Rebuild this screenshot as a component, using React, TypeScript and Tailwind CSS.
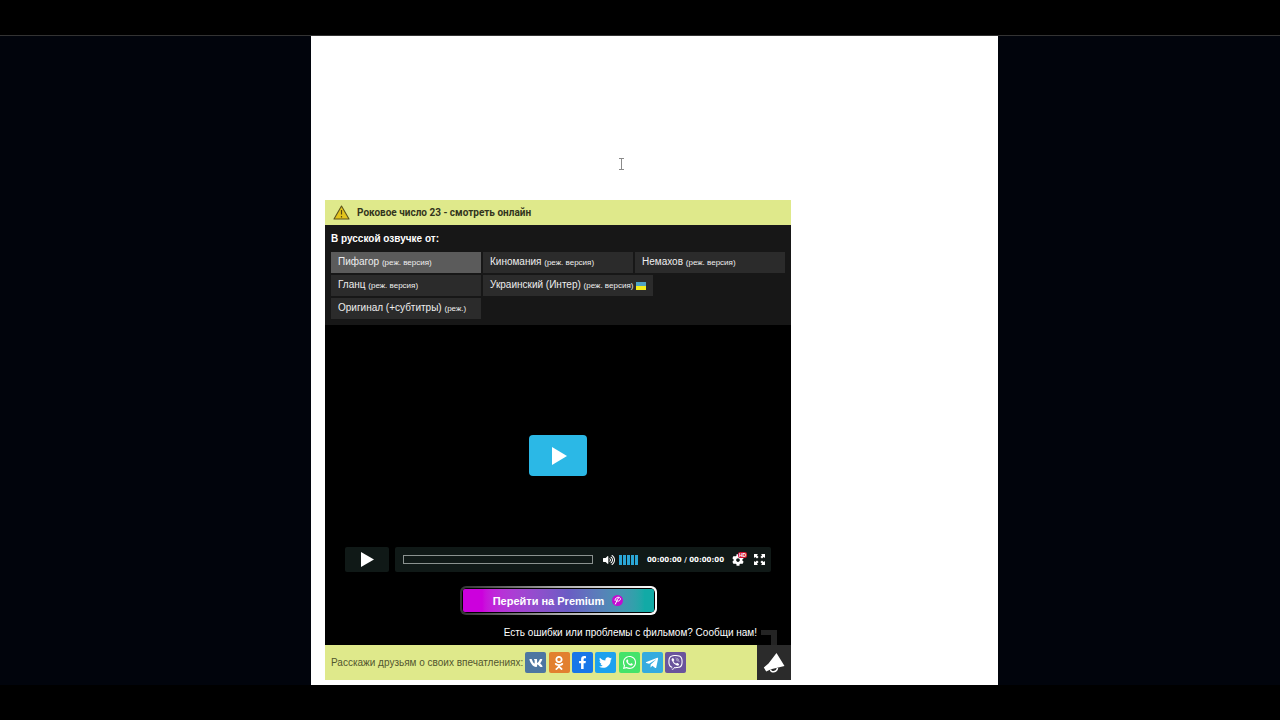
import { ReactNode } from 'react';
import { clsx } from 'clsx';
import {
  FaVk,
  FaOdnoklassniki,
  FaFacebookF,
  FaTwitter,
  FaWhatsapp,
  FaTelegramPlane,
  FaViber,
  FaCog,
  FaVolumeUp,
} from 'react-icons/fa';

type Voice = { name: string; note: string; flag?: boolean };

const voices: Voice[] = [
  { name: 'Пифагор', note: '(реж. версия)' },
  { name: 'Киномания', note: '(реж. версия)' },
  { name: 'Немахов', note: '(реж. версия)' },
  { name: 'Гланц', note: '(реж. версия)' },
  { name: 'Украинский (Интер)', note: '(реж. версия)', flag: true },
  { name: 'Оригинал (+субтитры)', note: '(реж.)' },
];

const socials: { label: string; color: string; icon: ReactNode }[] = [
  { label: 'ВКонтакте', color: 'bg-[#4d76a1]', icon: <FaVk size={14} /> },
  { label: 'Одноклассники', color: 'bg-[#e2802f]', icon: <FaOdnoklassniki size={14} /> },
  { label: 'Facebook', color: 'bg-[#1877e8]', icon: <FaFacebookF size={13} /> },
  { label: 'Twitter', color: 'bg-[#1da1ee]', icon: <FaTwitter size={13} /> },
  { label: 'WhatsApp', color: 'bg-[#45e36a]', icon: <FaWhatsapp size={15} /> },
  { label: 'Telegram', color: 'bg-[#35abdf]', icon: <FaTelegramPlane size={14} /> },
  { label: 'Viber', color: 'bg-[#6a549c]', icon: <FaViber size={15} /> },
];

function Warning() {
  return (
    <svg width="17" height="15" viewBox="0 0 17 15" aria-hidden="true">
      <path d="M8.5 1 16 14H1z" fill="#e3c51c" stroke="#5d531c" strokeWidth="1.1" strokeLinejoin="round" />
      <path d="M8.5 5v4.5M8.5 11v1.4" stroke="#5a4a10" strokeWidth="1.2" />
    </svg>
  );
}

function VoicePicker() {
  return (
    <section className="bg-[#171717] pt-[7px] pr-[6px] pb-[6px] pl-[6px]">
      <h2 className="text-[10px] leading-[14px] font-bold text-white">В русской озвучке от:</h2>
      <div className="mt-[6px] grid grid-cols-3 gap-[2px]">
        {voices.map((v, i) => (
          <button
            key={v.name}
            type="button"
            className={clsx(
              'flex h-[21px] items-center gap-[3px] px-[7px] text-left text-[10px] leading-[14px] whitespace-nowrap text-[#eeeeee]',
              i === 0 ? 'bg-[#5b5b5b]' : 'bg-[#2b2b2b]',
              v.flag && 'col-span-2 justify-self-start'
            )}
          >
            <span>
              {v.name} <span className="text-[8px]">{v.note}</span>
            </span>
            {v.flag && (
              <svg width="10" height="8" viewBox="0 0 10 8" aria-hidden="true">
                <rect width="10" height="4" fill="#4fa3c4" />
                <rect y="4" width="10" height="4" fill="#f4ee1c" />
              </svg>
            )}
          </button>
        ))}
      </div>
    </section>
  );
}

function Controls() {
  return (
    <div className="mx-[20px] mt-[71px] flex h-[25px] gap-[6px] text-white">
      <button type="button" aria-label="Play" className="flex w-[44px] items-center justify-center rounded-xs bg-[#101917]">
        <svg width="13" height="15" viewBox="0 0 13 15" fill="currentColor">
          <path d="M0 0 13 7.5 0 15z" />
        </svg>
      </button>
      <div className="flex flex-1 items-center rounded-xs bg-[#101917] pr-[6px] pl-[8px]">
        <input
          type="range"
          aria-label="Seek"
          defaultValue={0}
          className="h-[9px] min-w-0 flex-1 appearance-none border border-[#8b9290] bg-transparent [&::-webkit-slider-thumb]:w-0 [&::-webkit-slider-thumb]:appearance-none"
        />
        <button type="button" aria-label="Volume" className="ml-[10px] flex items-center gap-[4px]">
          <FaVolumeUp size={12} />
          <svg width="19" height="10" viewBox="0 0 19 10" fill="#2ba6d6">
            <path d="M0 0h3v10H0zM4 0h3v10H4zM8 0h3v10H8zM12 0h3v10h-3zM16 0h3v10h-3z" />
          </svg>
        </button>
        <span className="ml-[9px] font-['DejaVu_Sans',sans-serif] text-[7px] leading-[10px] font-bold whitespace-nowrap">
          00:00:00 / 00:00:00
        </span>
        <button type="button" aria-label="Quality" className="relative ml-[8px]">
          <FaCog size={12} />
          <span className="absolute -top-[2px] left-[6px] rounded-xs bg-[#d0102c] px-px text-[5px] leading-[6px] font-bold">
            HD
          </span>
        </button>
        <button type="button" aria-label="Fullscreen" className="ml-[10px]">
          <svg width="11" height="11" viewBox="0 0 11 11" fill="currentColor">
            <path d="M0 0h4L2.9 1.3 4.6 3 3 4.6 1.3 2.9 0 4zM11 0v4L9.7 2.9 8 4.6 6.4 3l1.7-1.7L7 0zM0 11V7l1.3 1.1L3 6.4 4.6 8 2.9 9.7 4 11zM11 11H7l1.1-1.3L6.4 8 8 6.4l1.7 1.7L11 7z" />
          </svg>
        </button>
      </div>
    </div>
  );
}

function Player() {
  return (
    <section className="flex flex-col bg-black pt-[110px]">
      <button
        type="button"
        aria-label="Play movie"
        className="flex h-[41px] w-[58px] items-center justify-center self-center rounded-sm bg-[#2bb8e6] pl-[3px] text-white"
      >
        <svg width="15" height="18" viewBox="0 0 15 18" fill="currentColor">
          <path d="M0 0 15 9 0 18z" />
        </svg>
      </button>

      <Controls />

      <button
        type="button"
        className="mt-[14px] self-center rounded-md bg-gradient-to-r from-[#333333] via-[#aaaaaa] to-white p-[2px]"
      >
        <span className="block rounded-[5px] bg-black p-px">
          <span className="flex h-[23px] w-[191px] items-center justify-center gap-[8px] rounded-xs bg-gradient-to-r from-[#cc00dd] from-10% via-[#6a5cc4] via-55% to-[#12aaa6] to-95% text-[11px] leading-[14px] font-bold text-white">
            Перейти на Premium
            <svg width="11" height="11" viewBox="0 0 11 11" aria-hidden="true">
              <circle cx="5.5" cy="5.5" r="5.5" fill="#c30bd2" />
              <path d="M3.4 9 5.2 5M3 5.5C2.6 3.2 5.5 1.6 7.4 2.4c1.9.9.9 3.5-1.2 3.8-1.2.1-1.700-.9-1-1.900l1.500-1.300" fill="none" stroke="#fff" strokeWidth="1" strokeLinecap="round" />
            </svg>
          </span>
        </span>
      </button>

      {/* report link, the elbow leads down to the megaphone */}
      <div className="mt-[8px] flex h-[22px] items-end justify-end gap-[4px] pr-[14px]">
        <a href="#report" className="pb-[5px] text-[10px] leading-[15px] text-white">
          Есть ошибки или проблемы с фильмом? Сообщи нам!
        </a>
        <span className="h-[15px] w-[16px] border-t-[5px] border-r-[6px] border-[#242424]" />
      </div>
    </section>
  );
}

function ShareBar() {
  return (
    <footer className="flex h-[35px] items-center bg-[#dfe98b] pl-[6px]">
      <span className="text-[10px] leading-[14px] whitespace-nowrap text-[#52562f]">
        Расскажи друзьям о своих впечатлениях:
      </span>
      <div className="ml-[2px] flex w-[161px] justify-between">
        {socials.map((s) => (
          <a
            key={s.label}
            href="#share"
            aria-label={s.label}
            className={clsx('flex size-[21px] items-center justify-center rounded-xs text-white', s.color)}
          >
            {s.icon}
          </a>
        ))}
      </div>
      <button
        type="button"
        aria-label="Сообщить о проблеме"
        className="ml-auto flex h-full w-[34px] items-center justify-center bg-[#2b2b2b] text-white"
      >
        <svg width="22" height="22" viewBox="0 0 22 22">
          <path d="M13.5 1 21.500 14 8 17.200 3.200 19.500.8 15.500 5.500 11.500z" fill="currentColor" />
          <path d="M7.500 17.500c0 3.500 6.500 3 7-1.500" fill="none" stroke="currentColor" strokeWidth="1.500" />
        </svg>
      </button>
    </footer>
  );
}

export default function App() {
  return (
    <div className="flex min-h-screen flex-col bg-black font-['Liberation_Sans',Arial,sans-serif]">
      <div className="h-[36px] border-b border-[#333333]" />
      <div className="grid flex-1 grid-cols-[311fr_687fr_282fr] bg-[#01040c]">
        <main className="relative col-start-2 bg-white pt-[164px] pb-[5px] pl-[14px]">
          <svg className="absolute top-[122px] left-[307px]" width="7" height="12" viewBox="0 0 7 12" aria-hidden="true">
            <path d="M1 .5h5M3.5 1v10M1 11.5h5" stroke="#8a8a8a" fill="none" />
          </svg>
          <div className="max-w-[466px]">
            <h1 className="flex h-[25px] items-center gap-[7px] bg-[#dfe98b] pl-[8px] font-[Roboto,sans-serif] text-[10px] leading-[14px] font-bold text-[#33351d]">
              <Warning />
              Роковое число 23 - смотреть онлайн
            </h1>
            <VoicePicker />
            <Player />
            <ShareBar />
          </div>
        </main>
      </div>
      <div className="h-[35px]" />
    </div>
  );
}
